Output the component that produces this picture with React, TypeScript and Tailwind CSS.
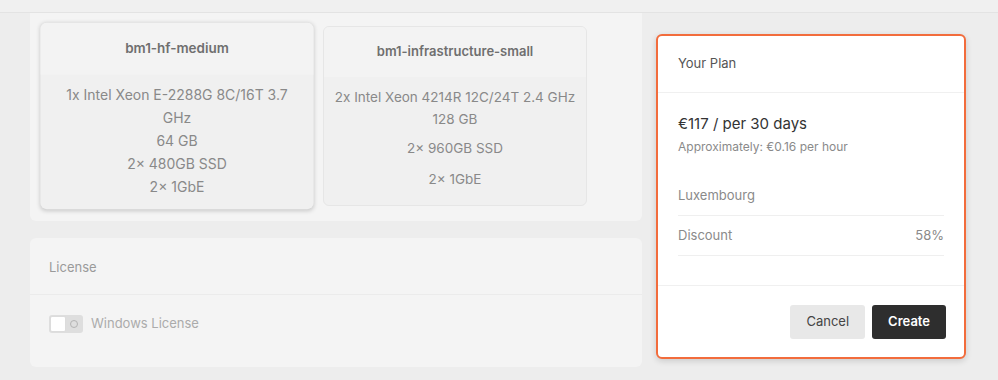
const font = { fontFamily: "Inter, 'Noto Sans', sans-serif" };

type Server = {
  name: string;
  specs: { text: string; cls?: string }[];
  selected?: boolean;
};

const servers: Server[] = [
  {
    name: "bm1-hf-medium",
    selected: true,
    specs: [
      { text: "1x Intel Xeon E-2288G 8C/16T 3.7 GHz" },
      { text: "64 GB" },
      { text: "2× 480GB SSD" },
      { text: "2× 1GbE" },
    ],
  },
  {
    name: "bm1-infrastructure-small",
    specs: [
      { text: "2x Intel Xeon 4214R 12C/24T 2.4 GHz" },
      { text: "128 GB" },
      { text: "2× 960GB SSD", cls: "mt-[7px]" },
      { text: "2× 1GbE", cls: "mt-[9px]" },
    ],
  },
];

const ServerCard = ({ server }: { server: Server }) => (
  <div
    className={
      "w-[264px] h-[180px] shrink-0 rounded-md bg-[#f0f0f0] overflow-hidden " +
      (server.selected
        ? "scale-[1.035] shadow-[0_1px_4px_rgba(0,0,0,0.18)]"
        : "border border-[#e6e6e6]")
    }
  >
    <div className="h-[50px] bg-[#f3f3f3] flex items-center justify-center text-[13px] font-semibold text-[#6f6f6f]">
      {server.name}
    </div>
    <div
      className={
        "pt-[9px] text-center text-[13.5px] leading-[22px] text-[#898989] " +
        (server.selected ? "px-3" : "px-1")
      }
    >
      {server.specs.map((s) => (
        <div key={s.text} className={s.cls}>
          {s.text}
        </div>
      ))}
    </div>
  </div>
);

const Toggle = () => (
  <div className="w-[34px] h-[18px] rounded-[3px] bg-[#dedede] flex items-center p-[1px]">
    <div className="w-[16px] h-[16px] rounded-[2px] bg-white border border-[#dcdcdc]" />
    <div className="flex-1 flex justify-center">
      <div className="w-[8px] h-[8px] rounded-full border border-[#b3b3b3]" />
    </div>
  </div>
);

export default function App() {
  return (
    <div className="w-[998px] h-[380px] bg-[#ededed] overflow-hidden" style={font}>
      <div className="h-[13px] bg-[#f0f0f0] border-b border-[#e3e3e3]" />
      <div className="flex pl-[30px] gap-[14px]">
        <div className="w-[612px] flex flex-col gap-[17px]">
          <div className="h-[208px] rounded-b-md bg-[#f4f4f4] flex items-start gap-[14px] px-[15px] pt-[13px]">
            {servers.map((s) => (
              <ServerCard key={s.name} server={s} />
            ))}
          </div>
          <div className="h-[129px] rounded-md bg-[#f4f4f4]">
            <div className="h-[57px] px-[19px] pt-[3px] flex items-center text-[13px] text-[#9a9a9a] border-b border-[#ebebeb]">
              License
            </div>
            <div className="px-[19px] pt-[19px] flex items-center gap-[8px]">
              <Toggle />
              <span className="text-[13px] text-[#ababab]">Windows License</span>
            </div>
          </div>
        </div>
        <div className="mt-[21px] w-[310px] h-[325px] rounded-md border-2 border-[#f26c3c] bg-white shadow-[0_2px_6px_rgba(0,0,0,0.15)] flex flex-col">
          <div className="h-[57px] px-[20px] flex items-center text-[13px] text-[#555] border-b border-[#f0f0f0]">
            Your Plan
          </div>
          <div className="px-[20px] pt-[20px] flex-1">
            <div className="text-[15px] text-[#333] leading-[22px]">€117 / per 30 days</div>
            <div className="mt-[3px] text-[12px] text-[#8a8a8a] leading-[18px]">
              Approximately: €0.16 per hour
            </div>
            <div className="mt-[20px] h-[40px] flex items-center text-[13px] text-[#8a8a8a] border-b border-[#efefef]">
              Luxembourg
            </div>
            <div className="h-[40px] flex items-center justify-between text-[13px] text-[#8a8a8a] border-b border-[#efefef]">
              <span>Discount</span>
              <span>58%</span>
            </div>
          </div>
          <div className="h-[72px] border-t border-[#f0f0f0] flex items-center justify-end gap-[7px] px-[18px]">
            <button className="h-[34px] px-[16px] rounded-[3px] bg-[#e8e8e8] text-[13px] text-[#444]">
              Cancel
            </button>
            <button className="h-[34px] px-[16px] rounded-[3px] bg-[#2e2e2e] text-[13px] font-semibold text-white">
              Create
            </button>
          </div>
        </div>
      </div>
    </div>
  );
}
